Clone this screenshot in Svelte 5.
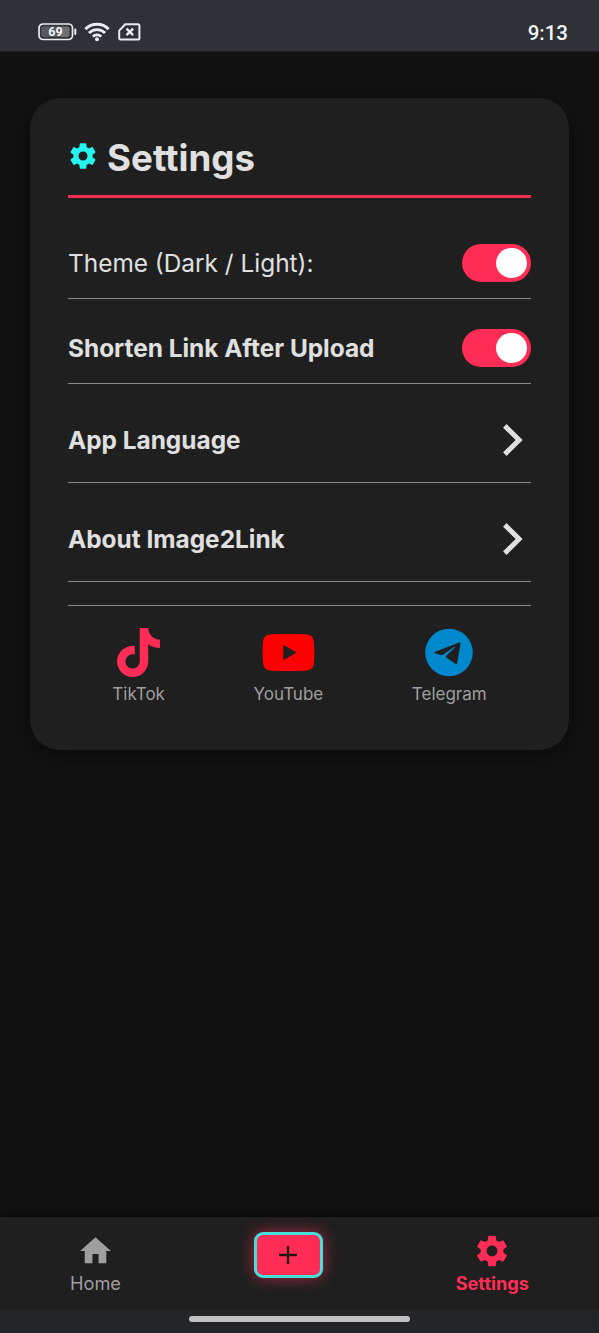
<script lang="ts">
  type Toggle = {
    label: string;
    strong: boolean;
  };

  const toggles: Toggle[] = [
    { label: "Theme (Dark / Light):", strong: false },
    { label: "Shorten Link After Upload", strong: true },
  ];
  const links = ["App Language", "About Image2Link"];

  let enabled = $state([true, true]);
</script>

{#snippet gear(size: number)}
  <svg class="gear" width={size} height={size} viewBox="0 0 24 24" fill="currentColor">
    <path
      d="M19.14 12.94c.04-.3.06-.61.06-.94 0-.32-.02-.64-.07-.94l2.03-1.58c.18-.14.23-.41.12-.61l-1.92-3.32c-.12-.22-.37-.29-.59-.22l-2.39.96c-.5-.38-1.03-.7-1.62-.94l-.36-2.54c-.04-.24-.24-.41-.48-.41h-3.84c-.24 0-.43.17-.47.41l-.36 2.54c-.59.24-1.13.57-1.62.94l-2.39-.96c-.22-.08-.47 0-.59.22L2.74 8.87c-.12.21-.08.47.12.61l2.03 1.58c-.05.3-.09.63-.09.94s.02.64.07.94l-2.03 1.58c-.18.14-.23.41-.12.61l1.92 3.32c.12.22.37.29.59.22l2.39-.96c.5.38 1.03.7 1.62.94l.36 2.54c.05.24.24.41.48.41h3.84c.24 0 .44-.17.47-.41l.36-2.54c.59-.24 1.13-.56 1.62-.94l2.39.96c.22.08.47 0 .59-.22l1.92-3.32c.12-.22.07-.47-.12-.61l-2.01-1.58zM12 15.4c-1.88 0-3.4-1.52-3.4-3.4s1.52-3.4 3.4-3.4 3.4 1.52 3.4 3.4-1.52 3.4-3.4 3.4z"
    />
  </svg>
{/snippet}

<div class="screen">
  <header class="status">
    <div class="status_icons">
      <svg width="39" height="18" viewBox="0 0 39 18">
        <rect x="1" y="1" width="33.5" height="15.5" rx="4" fill="none" stroke="#e9edf0" stroke-width="1.7" />
        <rect x="3.5" y="3.5" width="28" height="10.5" rx="2" fill="#6c7175" />
        <rect x="3.5" y="3.5" width="20" height="10.5" rx="2" fill="#55595d" />
        <path d="M37.3 6.5v4.5" stroke="#e9edf0" stroke-width="2" stroke-linecap="round" />
        <text x="17.4" y="13.2" text-anchor="middle">69</text>
      </svg>
      <svg class="wifi" width="26" height="20" viewBox="0 0 26 20" fill="none" stroke="#e9edf0">
        <path d="M1.4 7.1a16.2 16.2 0 0 1 23.2 0" stroke-width="3" />
        <path d="M5 11a11.2 11.2 0 0 1 16 0" stroke-width="2.8" />
        <path d="M8.7 14.6a6.2 6.2 0 0 1 8.6 0" stroke-width="2.6" />
        <circle cx="13" cy="17.3" r="2" fill="#e9edf0" stroke="none" />
      </svg>
      <svg class="sim" width="23" height="18" viewBox="0 0 23 18" fill="none" stroke="#e9edf0">
        <path d="M7.3 1.2H20a1.4 1.4 0 0 1 1.4 1.4v12.6a1.4 1.4 0 0 1-1.4 1.4H2.6a1.4 1.4 0 0 1-1.4-1.4V7.6z" stroke-width="2" stroke-linejoin="round" />
        <path d="M8.5 5.6l6.6 6.6M15.1 5.6L8.5 12.2" stroke-width="2.4" />
      </svg>
    </div>
    <span class="clock">9:13</span>
  </header>

  <main>
    <section class="card">
      <h1>
        {@render gear(32)}
        Settings
      </h1>

      {#each toggles as { label, strong }, i}
        <div class="row">
          <span class:strong>{label}</span>
          <button
            class="switch"
            class:on={enabled[i]}
            role="switch"
            aria-checked={enabled[i]}
            aria-label={label}
            onclick={() => (enabled[i] = !enabled[i])}
          >
            <i class="knob"></i>
          </button>
        </div>
      {/each}

      {#each links as label}
        <div class="row link">
          <span class="strong">{label}</span>
          <svg width="38" height="38" viewBox="0 0 38 38" fill="none" stroke="#e0e0e0" stroke-width="5">
            <path d="M11.8 4.9L26.1 19 11.8 33.1" />
          </svg>
        </div>
      {/each}

      <div class="socials">
        <a href="#tiktok">
          <svg width="43" height="49" viewBox="0 0 448 512" fill="#ff2d55">
            <path d="M448,209.91a210.06,210.06,0,0,1-122.77-39.25V349.38A162.55,162.55,0,1,1,185,188.31V278.2a74.62,74.62,0,1,0,52.23,71.18V0l88,0a121.18,121.18,0,0,0,1.86,22.17h0A122.18,122.18,0,0,0,381,102.39a121.43,121.43,0,0,0,67,20.14Z" />
          </svg>
          TikTok
        </a>
        <a href="#youtube">
          <svg width="53" height="49" viewBox="0 0 53 49" fill="#ff0000">
            <path
              fill-rule="evenodd"
              d="M10 6.3Q26.5 5.5 43 6.3C49 6.6 51.6 8.8 52 14.5Q52.9 24.5 52 34.5C51.6 40.2 49 42.4 43 42.7Q26.5 43.5 10 42.7C4 42.4 1.4 40.2 1 34.5Q.1 24.5 1 14.5C1.4 8.8 4 6.6 10 6.3ZM21.3 16.7V32.3L34.6 24.5Z"
            />
          </svg>
          YouTube
        </a>
        <a href="#telegram">
          <svg width="48" height="49" viewBox="0 0 48 49">
            <circle cx="24" cy="24.5" r="23.8" fill="#0088cc" />
            <path
              d="M9.6 24.1L34.1 14.6Q35.6 14.2 35.5 15.7L32.2 35.1Q31.8 36.5 30.5 35.7L21.2 29.4Q20.3 28.6 21.2 27.7L30 19.4Q30.2 18.6 29.2 19L18.2 26.5Q17.1 27.2 15.9 26.9L9.8 25.3Q8.6 24.7 9.6 24.1Z"
              fill="#1f1f1f"
            />
          </svg>
          Telegram
        </a>
      </div>
    </section>
  </main>

  <nav>
    <a class="tab" href="#home">
      <svg width="37" height="37" viewBox="0 0 24 24" fill="currentColor">
        <path d="M10 20v-6h4v6h5v-8h3L12 3 2 12h3v8z" />
      </svg>
      Home
    </a>
    <button class="add" aria-label="Add">
      <svg width="18" height="18" viewBox="0 0 18 18" stroke="#1f1416" stroke-width="2.3">
        <path d="M9 0v18M0 9h18" />
      </svg>
    </button>
    <a class="tab active" href="#settings">
      {@render gear(38)}
      Settings
    </a>
  </nav>

  <footer><div class="pill"></div></footer>
</div>

<style>
  :global(body) {
    background: #121212;
  }

  .screen {
    height: 1333px;
    display: flex;
    flex-direction: column;
    font-family: Inter, sans-serif;
    color: #e0e0e0;
    background: #121212;
    overflow: hidden;
  }

  .status {
    height: 52px;
    box-sizing: border-box;
    padding: 13px 31px 0 38px;
    display: flex;
    align-items: center;
    justify-content: space-between;
    background: #2e3236;
    border-bottom: 1px solid #1e2022;
  }

  .status_icons {
    display: flex;
    align-items: center;
  }

  .status_icons text {
    font: 700 12.5px Roboto, sans-serif;
    fill: #f1f4f6;
  }

  .wifi {
    margin-left: 7px;
  }

  .sim {
    margin-left: 8px;
  }

  .clock {
    margin-top: 1px;
    font: 500 20.5px Roboto, sans-serif;
    color: #f1f4f6;
  }

  main {
    flex: 1;
    padding: 46px 30px 0;
  }

  .card {
    height: 651.5px;
    box-sizing: border-box;
    padding: 38px;
    border-radius: 30px;
    background: #1f1f1f;
    box-shadow: 0 6px 23px rgba(0, 0, 0, 0.5);
  }

  h1 {
    height: 62px;
    box-sizing: border-box;
    margin: 0 0 31px;
    padding-bottom: 15px;
    border-bottom: 3px solid #ef2c52;
    display: flex;
    align-items: center;
    gap: 8px;
    font-size: 36.7px;
    font-weight: 700;
    line-height: 44px;
  }

  h1 .gear {
    color: #25f4ee;
    margin: -4px 0 0 -1px;
  }

  .row {
    height: 70px;
    box-sizing: border-box;
    padding-bottom: 1px;
    margin-bottom: 15px;
    border-bottom: 1px solid #8b8b8b;
    display: flex;
    align-items: center;
    justify-content: space-between;
    font-size: 24.4px;
  }

  .strong {
    font-weight: 700;
  }

  .link {
    height: 84px;
    padding-bottom: 2px;
  }

  button {
    padding: 0;
    border: none;
  }

  .switch {
    width: 69px;
    height: 38px;
    padding: 0 4.5px;
    border-radius: 19px;
    display: flex;
    align-items: center;
    background: #555555;
  }

  .switch.on {
    justify-content: flex-end;
    background: #ff2d55;
  }

  .knob {
    width: 30.5px;
    height: 30.5px;
    border-radius: 50%;
    background: #ffffff;
  }

  .socials {
    margin-top: 23px;
    padding-top: 22px;
    border-top: 1px solid #8b8b8b;
    display: flex;
    justify-content: space-around;
  }

  a {
    display: flex;
    flex-direction: column;
    align-items: center;
    color: #9e9e9e;
    text-decoration: none;
  }

  .socials a {
    gap: 6px;
    font-size: 17px;
    line-height: 22px;
  }

  nav {
    height: 92px;
    display: flex;
    justify-content: space-between;
    padding: 0 70px;
    background: #1f1f1f;
    box-shadow: 0 -3px 15px rgba(0, 0, 0, 0.5);
  }

  .tab {
    padding-top: 14.5px;
    gap: 1px;
    font-size: 18.2px;
    line-height: 24px;
  }

  .tab svg {
    height: 38px;
  }

  .active {
    color: #ff2d55;
    font-weight: 700;
  }

  .add {
    width: 69px;
    height: 46px;
    margin-top: 15px;
    border: 3px solid #48dfdb;
    border-radius: 9px;
    box-sizing: border-box;
    display: flex;
    align-items: center;
    justify-content: center;
    background: #ff2d55;
    box-shadow: 0 0 15px rgba(255, 45, 85, 0.6);
  }

  footer {
    height: 24px;
    display: flex;
    justify-content: center;
    align-items: flex-start;
    background: #242527;
  }

  .pill {
    width: 221px;
    height: 6px;
    margin-top: 7px;
    border-radius: 3px;
    background: #c2c2c3;
  }
</style>
